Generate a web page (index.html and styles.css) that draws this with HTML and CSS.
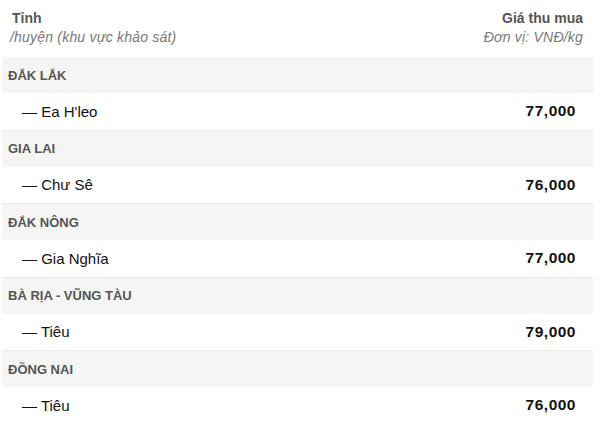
FILE: index.html
```html
<!DOCTYPE html>
<html lang="vi">
<head>
<meta charset="utf-8">
<link rel="stylesheet" href="styles.css">
</head>
<body>
<div class="table">
  <div class="head">
    <div class="hcol">
      <div class="htitle">Tỉnh</div>
      <div class="hsub">/huyện (khu vực khảo sát)</div>
    </div>
    <div class="hcol right">
      <div class="htitle">Giá thu mua</div>
      <div class="hsub">Đơn vị: VNĐ/kg</div>
    </div>
  </div>
  <div class="prov">ĐẮK LẮK</div>
  <div class="item"><span>— Ea H'leo</span><span class="price">77,000</span></div>
  <div class="prov">GIA LAI</div>
  <div class="item"><span>— Chư Sê</span><span class="price">76,000</span></div>
  <div class="prov">ĐẮK NÔNG</div>
  <div class="item"><span>— Gia Nghĩa</span><span class="price">77,000</span></div>
  <div class="prov">BÀ RỊA - VŨNG TÀU</div>
  <div class="item"><span>— Tiêu</span><span class="price">79,000</span></div>
  <div class="prov">ĐỒNG NAI</div>
  <div class="item"><span>— Tiêu</span><span class="price">76,000</span></div>
</div>
</body>
</html>
```
FILE: styles.css
```css
html, body {
  margin: 0;
  padding: 0;
  background: #fff;
}
body {
  font-family: "Liberation Sans", Arial, sans-serif;
}
.table {
  margin-left: 2px;
  width: 591px;
}
.head {
  display: flex;
  justify-content: space-between;
  height: 57px;
  box-sizing: border-box;
  padding: 9px 10px 0 10px;
}
.hcol.right {
  text-align: right;
}
.htitle {
  font-size: 14px;
  font-weight: bold;
  color: #555;
  line-height: 19px;
}
.hsub {
  font-size: 14px;
  font-style: italic;
  color: #777;
  line-height: 19px;
  letter-spacing: 0.2px;
}
.hcol:first-child .hsub {
  margin-left: -2px;
}
.prov {
  height: 36px;
  box-sizing: border-box;
  display: flex;
  align-items: center;
  padding-left: 6px;
  background: #f5f5f5;
  font-size: 13px;
  font-weight: bold;
  color: #555;
}
.item {
  height: 37.5px;
  box-sizing: border-box;
  display: flex;
  align-items: center;
  justify-content: space-between;
  padding: 0 17px 0 20px;
  border-bottom: 1px solid #ebebeb;
  font-size: 15px;
  color: #111;
}
.price {
  font-weight: bold;
  font-size: 15.5px;
  letter-spacing: 0.5px;
}
```
